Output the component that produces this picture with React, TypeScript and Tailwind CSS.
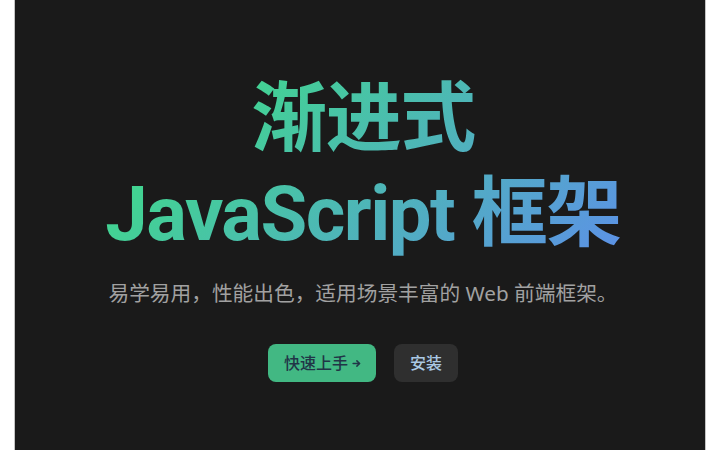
export default function App() {
  return (
    <div className="h-[450px] w-[720px] overflow-hidden bg-white">
      <div
        className="mx-auto flex h-full w-[692px] flex-col items-center border-x border-[#c4c4c4] bg-[#1a1a1a] pl-[38px] pr-[32px] pt-[72px] text-center"
        style={{ fontFamily: '"Noto Sans", "Noto Sans CJK SC", sans-serif' }}
      >
        {/* tagline */}
        <h1
          className="w-full bg-[linear-gradient(135deg,#42d392_25%,#647eff_112%)] bg-clip-text text-[76px] font-bold leading-[95px] tracking-[-1.5px] text-transparent"
          style={{ fontFamily: 'Roboto, "Noto Sans CJK SC", sans-serif' }}
        >
          渐进式
          <br />
          JavaScript 框架
        </h1>

        <p className="mt-[15px] text-[20.7px] leading-[33px] text-[#a1a1a1]">
          易学易用，性能出色，适用场景丰富的 Web 前端框架。
        </p>

        <div className="mt-[34px] flex items-center gap-[18px] text-[16px] font-medium leading-[22px]">
          <a className="flex items-center gap-[4px] rounded-lg bg-[#42b883] pl-4 pr-[15px] py-2 text-[#213547]">
            快速上手
            <svg width="9" height="9" viewBox="0 0 24 24" fill="none" stroke="currentColor" strokeWidth="4" strokeLinecap="round" strokeLinejoin="round">
              <path d="M3 12h17" />
              <path d="M13 5l7 7-7 7" />
            </svg>
          </a>
          <a className="rounded-lg bg-[#2f2f2f] px-4 py-2 text-[#aac8e4]">安装</a>
        </div>
      </div>
    </div>
  );
}
